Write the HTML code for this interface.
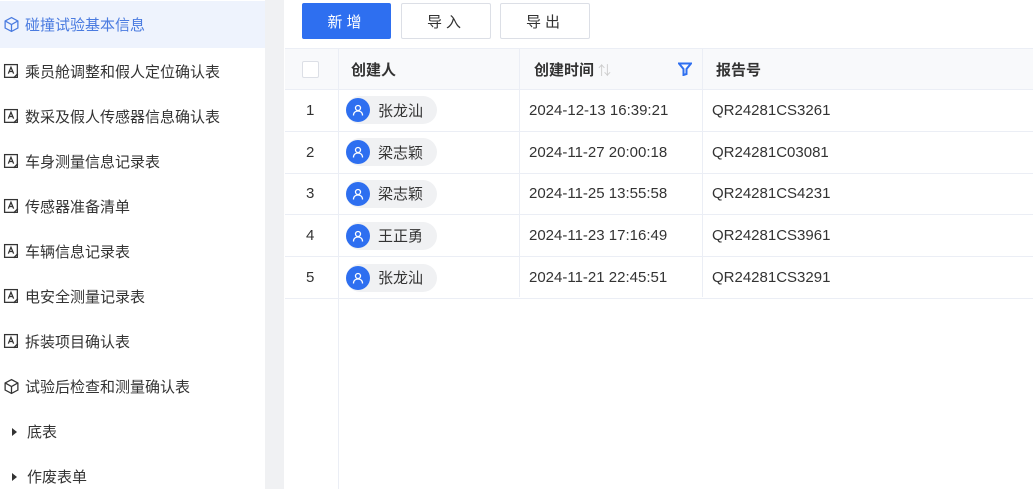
<!DOCTYPE html>
<html><head><meta charset="utf-8"><style>
*{margin:0;padding:0;box-sizing:border-box}
body{width:1033px;height:489px;overflow:hidden;background:#fff;font-family:"Liberation Sans","Noto Sans CJK SC",sans-serif;color:#333;position:relative}
.side{position:absolute;left:0;top:0;width:265px;height:489px;background:#fff}
.gap{position:absolute;left:265px;top:0;width:19px;height:489px;background:#f0f1f3}
.it{position:absolute;left:0;width:265px;height:45px;display:flex;align-items:center;font-size:15px;color:#333}
.it svg{margin-left:3px;margin-right:5px;flex-shrink:0;width:17px;height:17px}
.it.act{background:#eef3fd;color:#4a7be0;height:47px}
.tri{margin-left:12px;margin-right:10px;width:0;height:0;border-left:5px solid #333;border-top:4px solid transparent;border-bottom:4px solid transparent}
.btn{position:absolute;top:3px;height:36px;border:1px solid #dcdfe6;border-radius:2px;font-size:15px;display:flex;align-items:center;justify-content:center;letter-spacing:4px;background:#fff;color:#333}
.tbl{position:absolute;left:285px;top:48px;width:748px}
.row{position:relative;height:41.8px;border-bottom:1px solid #ebeef5;font-size:15px}
.hd{background:#f8f9fb;font-weight:bold;height:42px}
.c{position:absolute;top:0;height:100%;display:flex;align-items:center}
.vl{position:absolute;top:48px;width:1px;background:#ebeef5}
.av{width:24px;height:24px;border-radius:50%;background:#2e6ff0;display:flex;align-items:center;justify-content:center;margin-right:8px;flex-shrink:0}
.pill{display:flex;align-items:center;background:#f0f1f3;border-radius:14px;padding:0 14px 0 0;height:28px;margin-left:9px}
</style></head><body>
<div class="side">
<div class="it act" style="top:1px"><svg viewBox="0 0 16 16" fill="none" stroke="#4a7be0" stroke-width="1.2"><path d="M8 1.5l6 3.2v6.6L8 14.5 2 11.3V4.7z"/><path d="M2 4.7l6 3.3 6-3.3M8 8v6.5"/></svg>碰撞试验基本信息</div>
<div class="it" style="top:49px"><svg viewBox="0 0 16 16" fill="none" stroke="#333" stroke-width="1.2"><rect x="1.5" y="1.5" width="12" height="12"/><path d="M5 10l2.5-6 2.5 6M6 8h3M10 14l4-4"/></svg>乘员舱调整和假人定位确认表</div>
<div class="it" style="top:94px"><svg viewBox="0 0 16 16" fill="none" stroke="#333" stroke-width="1.2"><rect x="1.5" y="1.5" width="12" height="12"/><path d="M5 10l2.5-6 2.5 6M6 8h3M10 14l4-4"/></svg>数采及假人传感器信息确认表</div>
<div class="it" style="top:139px"><svg viewBox="0 0 16 16" fill="none" stroke="#333" stroke-width="1.2"><rect x="1.5" y="1.5" width="12" height="12"/><path d="M5 10l2.5-6 2.5 6M6 8h3M10 14l4-4"/></svg>车身测量信息记录表</div>
<div class="it" style="top:184px"><svg viewBox="0 0 16 16" fill="none" stroke="#333" stroke-width="1.2"><rect x="1.5" y="1.5" width="12" height="12"/><path d="M5 10l2.5-6 2.5 6M6 8h3M10 14l4-4"/></svg>传感器准备清单</div>
<div class="it" style="top:229px"><svg viewBox="0 0 16 16" fill="none" stroke="#333" stroke-width="1.2"><rect x="1.5" y="1.5" width="12" height="12"/><path d="M5 10l2.5-6 2.5 6M6 8h3M10 14l4-4"/></svg>车辆信息记录表</div>
<div class="it" style="top:274px"><svg viewBox="0 0 16 16" fill="none" stroke="#333" stroke-width="1.2"><rect x="1.5" y="1.5" width="12" height="12"/><path d="M5 10l2.5-6 2.5 6M6 8h3M10 14l4-4"/></svg>电安全测量记录表</div>
<div class="it" style="top:319px"><svg viewBox="0 0 16 16" fill="none" stroke="#333" stroke-width="1.2"><rect x="1.5" y="1.5" width="12" height="12"/><path d="M5 10l2.5-6 2.5 6M6 8h3M10 14l4-4"/></svg>拆装项目确认表</div>
<div class="it" style="top:364px"><svg viewBox="0 0 16 16" fill="none" stroke="#333" stroke-width="1.2"><path d="M8 1.5l6 3.2v6.6L8 14.5 2 11.3V4.7z"/><path d="M2 4.7l6 3.3 6-3.3M8 8v6.5"/></svg>试验后检查和测量确认表</div>
<div class="it" style="top:409px"><span class="tri"></span>底表</div>
<div class="it" style="top:454px"><span class="tri"></span>作废表单</div>
</div>
<div class="gap"></div>
<div class="btn" style="left:302px;width:89px;background:#2e6ff0;border-color:#2e6ff0;color:#fff">新增</div>
<div class="btn" style="left:401px;width:90px">导入</div>
<div class="btn" style="left:500px;width:90px">导出</div>
<div class="tbl">
<div class="row hd" style="border-top:1px solid #ebeef5"><div class="c" style="left:17px"><div style="width:17px;height:17px;border:1px solid #dcdfe6;background:#fff;border-radius:2px"></div></div><div class="c" style="left:66px">创建人</div><div class="c" style="left:249px">创建时间 <span style="color:#ccc;font-weight:normal;margin-left:4px;font-size:13px">⇅</span></div><div class="c" style="left:393px"><svg width="14" height="14" viewBox="0 0 14 14"><path d="M1 1.5h12L8.5 7v5L5.5 13V7z" fill="none" stroke="#2e6ff0" stroke-width="2"/></svg></div><div class="c" style="left:431px">报告号</div></div>
<div class="row"><div class="c" style="left:21px">1</div><div class="c" style="left:52px"><div class="pill"><div class="av"><svg width="12" height="12" viewBox="0 0 12 12" fill="none" stroke="#fff" stroke-width="1.3"><circle cx="6" cy="4" r="2.5"/><path d="M1.5 11.5c0-3 2-4.5 4.5-4.5s4.5 1.5 4.5 4.5"/></svg></div>张龙汕</div></div><div class="c" style="left:244px">2024-12-13 16:39:21</div><div class="c" style="left:427px">QR24281CS3261</div></div>
<div class="row"><div class="c" style="left:21px">2</div><div class="c" style="left:52px"><div class="pill"><div class="av"><svg width="12" height="12" viewBox="0 0 12 12" fill="none" stroke="#fff" stroke-width="1.3"><circle cx="6" cy="4" r="2.5"/><path d="M1.5 11.5c0-3 2-4.5 4.5-4.5s4.5 1.5 4.5 4.5"/></svg></div>梁志颖</div></div><div class="c" style="left:244px">2024-11-27 20:00:18</div><div class="c" style="left:427px">QR24281C03081</div></div>
<div class="row"><div class="c" style="left:21px">3</div><div class="c" style="left:52px"><div class="pill"><div class="av"><svg width="12" height="12" viewBox="0 0 12 12" fill="none" stroke="#fff" stroke-width="1.3"><circle cx="6" cy="4" r="2.5"/><path d="M1.5 11.5c0-3 2-4.5 4.5-4.5s4.5 1.5 4.5 4.5"/></svg></div>梁志颖</div></div><div class="c" style="left:244px">2024-11-25 13:55:58</div><div class="c" style="left:427px">QR24281CS4231</div></div>
<div class="row"><div class="c" style="left:21px">4</div><div class="c" style="left:52px"><div class="pill"><div class="av"><svg width="12" height="12" viewBox="0 0 12 12" fill="none" stroke="#fff" stroke-width="1.3"><circle cx="6" cy="4" r="2.5"/><path d="M1.5 11.5c0-3 2-4.5 4.5-4.5s4.5 1.5 4.5 4.5"/></svg></div>王正勇</div></div><div class="c" style="left:244px">2024-11-23 17:16:49</div><div class="c" style="left:427px">QR24281CS3961</div></div>
<div class="row"><div class="c" style="left:21px">5</div><div class="c" style="left:52px"><div class="pill"><div class="av"><svg width="12" height="12" viewBox="0 0 12 12" fill="none" stroke="#fff" stroke-width="1.3"><circle cx="6" cy="4" r="2.5"/><path d="M1.5 11.5c0-3 2-4.5 4.5-4.5s4.5 1.5 4.5 4.5"/></svg></div>张龙汕</div></div><div class="c" style="left:244px">2024-11-21 22:45:51</div><div class="c" style="left:427px">QR24281CS3291</div></div>
</div>
<div class="vl" style="left:338px;height:441px"></div>
<div class="vl" style="left:519px;height:249px"></div>
<div class="vl" style="left:702px;height:249px"></div>
</body></html>
